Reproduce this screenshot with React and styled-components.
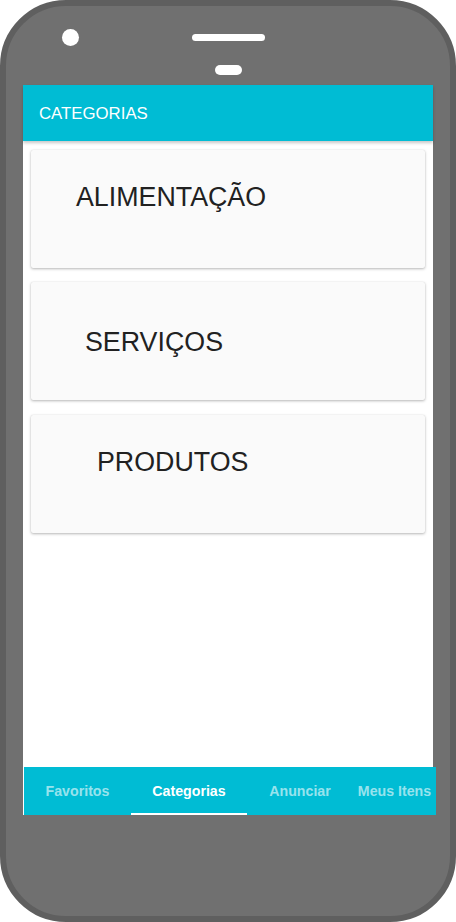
import React from "react";
import styled, { createGlobalStyle } from "styled-components";

const Global = createGlobalStyle`
  html, body { margin: 0; padding: 0; background: #ffffff; }
  body { font-family: "Liberation Sans", Arial, sans-serif; }
  * { box-sizing: border-box; }
`;

const Frame = styled.div`
  width: 456px;
  height: 922px;
  border: 6px solid #5f5f5f;
  border-radius: 66px;
  background: #707070;
  display: flex;
  flex-direction: column;
  overflow: hidden;
`;

const TopBar = styled.div`
  height: 79px;
  flex-shrink: 0;
  display: grid;
  grid-template-columns: 1fr auto 1fr;
  align-items: start;
  padding-top: 23px;
`;

const Camera = styled.div`
  width: 17px;
  height: 17px;
  border-radius: 50%;
  background: #ffffff;
  margin-left: 56px;
`;

const SpeakerCol = styled.div`
  display: flex;
  flex-direction: column;
  align-items: center;
  padding-top: 5px;
  gap: 24px;
`;

const Speaker = styled.div`
  width: 73px;
  height: 7px;
  border-radius: 4px;
  background: #ffffff;
`;

const Pill = styled.div`
  width: 27px;
  height: 10px;
  border-radius: 5px;
  background: #ffffff;
`;

const Screen = styled.div`
  margin-left: 17px;
  width: 410px;
  height: 730px;
  flex-shrink: 0;
  background: #ffffff;
  display: flex;
  flex-direction: column;
`;

const Header = styled.div`
  height: 56px;
  flex-shrink: 0;
  background: #00bcd4;
  color: #ffffff;
  font-size: 16.8px;
  display: flex;
  align-items: center;
  padding-left: 16px;
  padding-top: 1px;
  position: relative;
  z-index: 1;
  box-shadow: 0 2px 3px rgba(0, 0, 0, 0.22);
`;

const Content = styled.div`
  flex: 1;
  padding: 9px 8px;
  display: flex;
  flex-direction: column;
`;

const Card = styled.div`
  height: 118px;
  flex-shrink: 0;
  background: #fafafa;
  border-radius: 2px;
  box-shadow: 0 1px 3px rgba(0, 0, 0, 0.28), 0 0 1px rgba(0, 0, 0, 0.12);
  margin-top: ${(p) => p.$gap}px;
  padding-top: ${(p) => p.$top}px;
  padding-left: ${(p) => p.$left}px;
  font-size: 26.8px;
  line-height: 31px;
  color: #212121;
`;

const TabBar = styled.div`
  height: 48px;
  width: 412px;
  margin-left: 1px;
  flex-shrink: 0;
  background: #00bcd4;
  display: flex;
`;

const Tab = styled.div`
  width: ${(p) => p.$w}px;
  flex-shrink: 0;
  display: flex;
  align-items: center;
  justify-content: center;
  font-size: 14.2px;
  font-weight: bold;
  white-space: nowrap;
  color: ${(p) => (p.$active ? "#ffffff" : "rgba(255,255,255,0.6)")};
  box-shadow: ${(p) => (p.$active ? "inset 0 -2px 0 #ffffff" : "none")};
`;

const categories = [
  { label: "ALIMENTAÇÃO", gap: 0, top: 32, left: 45 },
  { label: "SERVIÇOS", gap: 14, top: 45, left: 54 },
  { label: "PRODUTOS", gap: 15, top: 32, left: 66 },
];

const tabs = [
  { label: "Favoritos", w: 107 },
  { label: "Categorias", w: 116, active: true },
  { label: "Anunciar", w: 106 },
  { label: "Meus Itens", w: 83 },
];

export default function App() {
  return (
    <>
      <Global />
      <Frame>
        <TopBar>
          <Camera />
          <SpeakerCol>
            <Speaker />
            <Pill />
          </SpeakerCol>
          <div />
        </TopBar>
        <Screen>
          <Header>CATEGORIAS</Header>
          <Content>
            {categories.map((c) => (
              <Card key={c.label} $gap={c.gap} $top={c.top} $left={c.left}>
                {c.label}
              </Card>
            ))}
          </Content>
          <TabBar>
            {tabs.map((t) => (
              <Tab key={t.label} $w={t.w} $active={t.active}>
                {t.label}
              </Tab>
            ))}
          </TabBar>
        </Screen>
      </Frame>
    </>
  );
}
